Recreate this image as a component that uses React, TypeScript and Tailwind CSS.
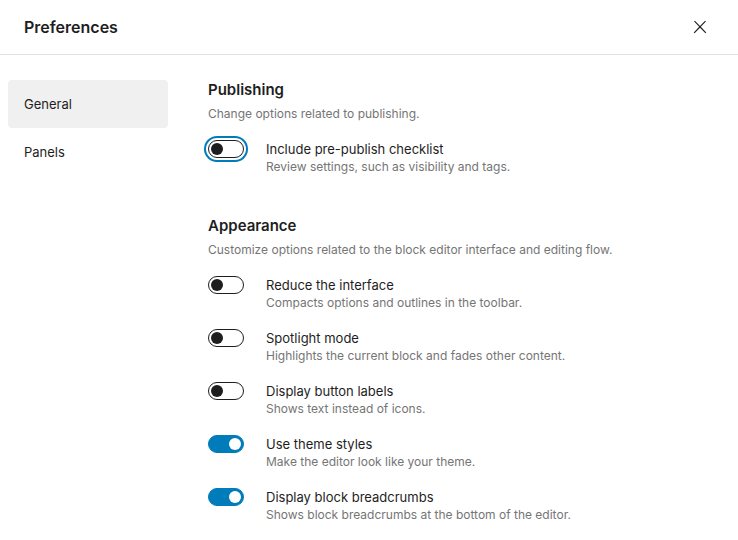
import React, { useState } from 'react';

type Option = { label: string; help: string; on: boolean; focused?: boolean };

const publishing: Option[] = [
  { label: 'Include pre-publish checklist', help: 'Review settings, such as visibility and tags.', on: false, focused: true },
];

const appearance: Option[] = [
  { label: 'Reduce the interface', help: 'Compacts options and outlines in the toolbar.', on: false },
  { label: 'Spotlight mode', help: 'Highlights the current block and fades other content.', on: false },
  { label: 'Display button labels', help: 'Shows text instead of icons.', on: false },
  { label: 'Use theme styles', help: 'Make the editor look like your theme.', on: true },
  { label: 'Display block breadcrumbs', help: 'Shows block breadcrumbs at the bottom of the editor.', on: true },
];

function Toggle({ on, focused, onClick }: { on: boolean; focused?: boolean; onClick: () => void }) {
  return (
    <button
      type="button"
      onClick={onClick}
      className={`relative mt-px h-[18px] w-9 shrink-0 rounded-full border ${
        on ? 'border-[#007cba] bg-[#007cba]' : 'border-[#1e1e1e] bg-white'
      } ${focused ? 'shadow-[0_0_0_2px_#fff,0_0_0_4px_#007cba]' : ''}`}
    >
      <span
        className={`absolute top-[2px] h-3 w-3 rounded-full ${on ? 'left-[20px] bg-white' : 'left-[2px] bg-[#1e1e1e]'}`}
      />
    </button>
  );
}

function Section({ title, desc, options, className }: { title: string; desc: string; options: Option[]; className?: string }) {
  const [state, setState] = useState(options.map((o) => o.on));
  return (
    <section className={className}>
      <h2 className="text-[15px] font-semibold leading-5 text-[#1e1e1e]">{title}</h2>
      <p className="mt-1 text-[12px] leading-5 text-[#757575]">{desc}</p>
      <div className="mt-[15px] flex flex-col gap-[17px]">
        {options.map((o, i) => (
          <div key={o.label} className="flex items-start gap-[22px]">
            <Toggle
              on={state[i]}
              focused={o.focused}
              onClick={() => setState((s) => s.map((v, j) => (j === i ? !v : v)))}
            />
            <div>
              <div className="text-[13px] leading-5 text-[#1e1e1e]">{o.label}</div>
              <div className="text-[12px] leading-4 text-[#757575]">{o.help}</div>
            </div>
          </div>
        ))}
      </div>
    </section>
  );
}

export default function App() {
  const [tab, setTab] = useState('General');
  return (
    <div className="h-[540px] w-[738px] overflow-hidden bg-white font-['Inter','Liberation_Sans',sans-serif] text-[#1e1e1e]">
      {/* Header */}
      <div className="flex h-[55px] items-center justify-between border-b border-[#e0e0e0] pb-px pl-6 pr-7">
        <h1 className="text-[16px] font-semibold">Preferences</h1>
        <button type="button" className="flex h-5 w-5 items-center justify-center">
          <svg viewBox="0 0 24 24" width="20" height="20" fill="#1e1e1e">
            <path d="M13 11.8l6.1-6.3-1-1-6.1 6.2-6.1-6.2-1 1 6.1 6.3-6.5 6.7 1 1 6.5-6.6 6.5 6.6 1-1z" />
          </svg>
        </button>
      </div>

      <div className="flex">
        {/* Sidebar */}
        <nav className="flex w-[176px] shrink-0 flex-col pl-2 pr-2 pt-[25px]">
          {['General', 'Panels'].map((t) => (
            <button
              key={t}
              type="button"
              onClick={() => setTab(t)}
              className={`h-12 rounded-sm px-4 pt-px text-left text-[13px] ${tab === t ? 'bg-[#f0f0f0]' : ''}`}
            >
              {t}
            </button>
          ))}
        </nav>

        {/* Content */}
        <main className="flex-1 pl-8 pt-[25px]">
          <Section title="Publishing" desc="Change options related to publishing." options={publishing} />
          <Section
            className="mt-[41px]"
            title="Appearance"
            desc="Customize options related to the block editor interface and editing flow."
            options={appearance}
          />
        </main>
      </div>
    </div>
  );
}
